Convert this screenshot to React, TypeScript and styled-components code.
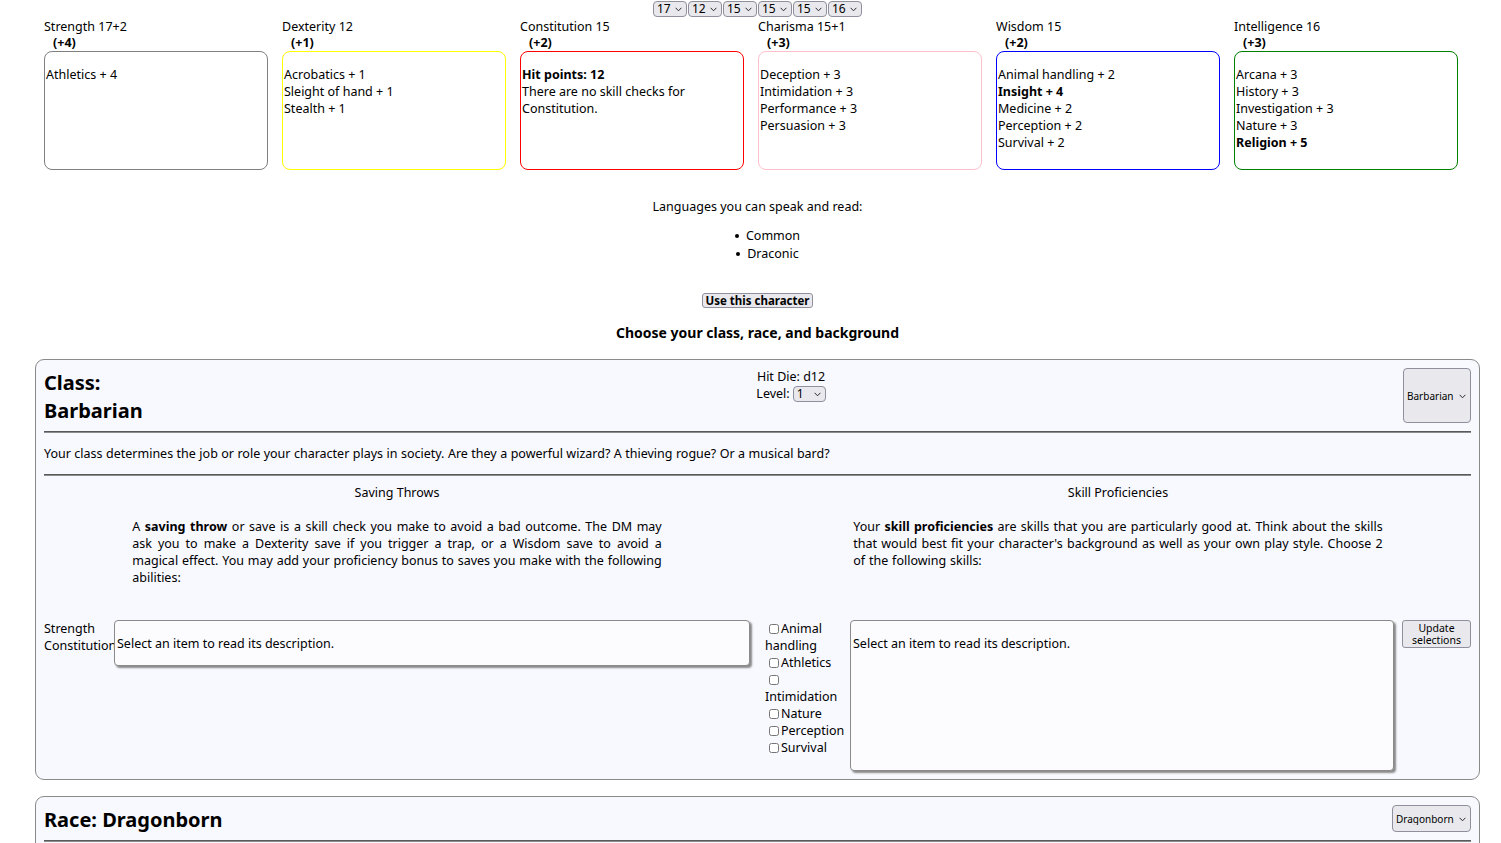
import React from "react";
import styled, { createGlobalStyle } from "styled-components";

const FONT = `"Noto Sans", "Open Sans", "DejaVu Sans", sans-serif`;

const Global = createGlobalStyle`
  html, body { margin: 0; padding: 0; background: #ffffff; }
  body {
    font-family: ${FONT};
    font-size: 12.5px;
    line-height: 17px;
    color: #000;
  }
`;

const Page = styled.div`
  padding-left: 14px;
`;

const ScoreBar = styled.div`
  display: flex;
  justify-content: center;
  gap: 1px;
  height: 17.5px;
  padding-top: 1px;
  box-sizing: border-box;
`;

const SelectWrap = styled.span`
  position: relative;
  display: inline-block;
  vertical-align: top;
`;

const NativeSelect = styled.select<{ $w: number; $h: number; $fs: number }>`
  appearance: none;
  -webkit-appearance: none;
  display: block;
  width: ${(p) => p.$w}px;
  height: ${(p) => p.$h}px;
  font-family: ${FONT};
  font-size: ${(p) => p.$fs}px;
  line-height: 12px;
  background-color: #e9e9ed;
  border: 1px solid #8f8f9d;
  border-radius: 4px;
  color: #000;
  padding: 0 0 0 3px;
  margin: 0;
  box-sizing: border-box;
`;

const Chevron = styled.svg`
  position: absolute;
  right: 5px;
  top: 50%;
  margin-top: -2px;
  width: 7px;
  height: 5px;
  pointer-events: none;
`;

type SelProps = {
  w: number;
  h: number;
  fs: number;
  value: string | number;
  options: (string | number)[];
};

function Dropdown({ w, h, fs, value, options }: SelProps) {
  return (
    <SelectWrap>
      <NativeSelect $w={w} $h={h} $fs={fs} defaultValue={String(value)}>
        {options.map((o) => (
          <option key={o} value={String(o)}>
            {o}
          </option>
        ))}
      </NativeSelect>
      <Chevron viewBox="0 0 7 5">
        <path d="M0.6 0.8 L3.5 3.8 L6.4 0.8" fill="none" stroke="#2b2b2b" strokeWidth="1" />
      </Chevron>
    </SelectWrap>
  );
}

const AbilityRow = styled.div`
  display: flex;
  gap: 14px;
  margin-left: 30px;
`;

const AbilityCol = styled.div`
  width: 224px;
`;

const Modifier = styled.div`
  font-weight: bold;
  padding-left: 9px;
  line-height: 16.5px;
`;

const SkillBox = styled.div<{ $color: string }>`
  box-sizing: border-box;
  height: 119px;
  border: 1px solid ${(p) => p.$color};
  border-radius: 8px;
  padding: 14px 1px 0;
  background: #fff;
`;

const SkillLine = styled.div<{ $bold?: boolean }>`
  font-weight: ${(p) => (p.$bold ? "bold" : "normal")};
`;

const Languages = styled.div`
  margin-top: 28px;
  text-align: center;
`;

const LangList = styled.ul`
  list-style: none;
  margin: 12px 0 0;
  padding-left: 20px;
  text-align: center;
`;

const LangItem = styled.li`
  line-height: 18px;
  &::before {
    content: "";
    display: inline-block;
    width: 4px;
    height: 4px;
    border-radius: 50%;
    background: #000;
    margin-right: 7px;
    vertical-align: 2px;
  }
`;

const UseRow = styled.div`
  display: flex;
  justify-content: center;
  margin-top: 30px;
`;

const SmallButton = styled.button<{ $w: number; $h: number; $fs: number; $bold?: boolean }>`
  width: ${(p) => p.$w}px;
  height: ${(p) => p.$h}px;
  font-family: ${FONT};
  font-size: ${(p) => p.$fs}px;
  line-height: ${(p) => (p.$bold ? "13px" : "12px")};
  font-weight: ${(p) => (p.$bold ? "bold" : "normal")};
  background: #e9e9ed;
  border: 1px solid #8f8f9d;
  border-radius: 3px;
  color: #000;
  padding: 0;
  margin: 0;
  box-sizing: border-box;
`;

const SectionHeading = styled.h3`
  margin: 15px 0 16px;
  font-size: 14px;
  line-height: 20px;
  text-align: center;
  font-weight: bold;
`;

const Panel = styled.section<{ $gap?: number }>`
  margin: ${(p) => p.$gap ?? 0}px 21px 0;
  border: 1px solid #8a8a8a;
  border-radius: 9px;
  background: #f8f8ff;
  padding: 8px;
`;

const PanelHeader = styled.div`
  display: flex;
  align-items: flex-start;
`;

const PanelTitle = styled.h2<{ $w?: number }>`
  margin: 1px 0 0;
  font-size: 20px;
  line-height: 28px;
  font-weight: bold;
  width: ${(p) => (p.$w ? `${p.$w}px` : "auto")};
  white-space: ${(p) => (p.$w ? "normal" : "nowrap")};
`;

const HeaderMid = styled.div`
  flex: 1;
  text-align: center;
  padding-left: 38px;
`;

const LevelLine = styled.div`
  display: flex;
  justify-content: center;
  align-items: center;
  gap: 3px;
  height: 17px;
`;

const HeaderSpacer = styled.div`
  flex: 1;
`;

const Divider = styled.div<{ $top: number }>`
  margin-top: ${(p) => p.$top}px;
  border-top: 1px solid #5a5a5a;
  border-bottom: 1px solid #8c8c8c;
`;

const Blurb = styled.p`
  margin: 12px 0 12px;
  word-spacing: 0.2px;
`;

const Columns = styled.div`
  display: grid;
  grid-template-columns: 1fr 1fr;
  column-gap: 15px;
`;

const ColTitle = styled.div`
  margin-top: 8px;
  text-align: center;
`;

const ColText = styled.p<{ $ws: number }>`
  width: 75%;
  margin: 17px auto 34px;
  text-align: justify;
  word-spacing: ${(p) => p.$ws}px;
`;

const PickRow = styled.div`
  display: flex;
  align-items: stretch;
`;

const SaveList = styled.div`
  width: 70px;
  flex: none;
`;

const SaveDescCol = styled.div`
  flex: 1;
  display: flex;
  align-items: flex-start;
`;

const SkillList = styled.div`
  width: 81px;
  flex: none;
  margin-right: 4px;
  padding-bottom: 15px;
`;

const CheckItem = styled.label`
  display: block;
`;

const Check = styled.input`
  width: 10px;
  height: 10px;
  margin: 0 2px 0 4px;
  vertical-align: -1px;
`;

const DescBox = styled.div`
  flex: 1;
  border: 1px solid #8a8a8a;
  border-radius: 4px;
  box-shadow: 2px 2px 2px #8a8a8a;
  padding: 14px 2px 13px;
  background: #fcfcff;
`;

const SideButton = styled.div`
  margin-left: 8px;
  flex: none;
`;

const scores = [17, 12, 15, 15, 15, 16];
const scoreOptions = [8, 9, 10, 11, 12, 13, 14, 15, 16, 17, 18];

type Ability = {
  label: string;
  mod: string;
  color: string;
  lines: { text: string; bold?: boolean }[];
};

const abilities: Ability[] = [
  { label: "Strength 17+2", mod: "(+4)", color: "#808080", lines: [{ text: "Athletics + 4" }] },
  {
    label: "Dexterity 12",
    mod: "(+1)",
    color: "#ffff00",
    lines: [{ text: "Acrobatics + 1" }, { text: "Sleight of hand + 1" }, { text: "Stealth + 1" }],
  },
  {
    label: "Constitution 15",
    mod: "(+2)",
    color: "#ff0000",
    lines: [{ text: "Hit points: 12", bold: true }, { text: "There are no skill checks for Constitution." }],
  },
  {
    label: "Charisma 15+1",
    mod: "(+3)",
    color: "#ffc0cb",
    lines: [
      { text: "Deception + 3" },
      { text: "Intimidation + 3" },
      { text: "Performance + 3" },
      { text: "Persuasion + 3" },
    ],
  },
  {
    label: "Wisdom 15",
    mod: "(+2)",
    color: "#0000ff",
    lines: [
      { text: "Animal handling + 2" },
      { text: "Insight + 4", bold: true },
      { text: "Medicine + 2" },
      { text: "Perception + 2" },
      { text: "Survival + 2" },
    ],
  },
  {
    label: "Intelligence 16",
    mod: "(+3)",
    color: "#008000",
    lines: [
      { text: "Arcana + 3" },
      { text: "History + 3" },
      { text: "Investigation + 3" },
      { text: "Nature + 3" },
      { text: "Religion + 5", bold: true },
    ],
  },
];

const skillChoices = ["Animal handling", "Athletics", "Intimidation", "Nature", "Perception", "Survival"];
const levels = Array.from({ length: 20 }, (_, i) => i + 1);

export default function App() {
  return (
    <Page>
      <Global />
      <ScoreBar>
        {scores.map((s, i) => (
          <Dropdown key={i} w={34} h={16} fs={12} value={s} options={scoreOptions} />
        ))}
      </ScoreBar>

      <AbilityRow>
        {abilities.map((a) => (
          <AbilityCol key={a.label}>
            <div>{a.label}</div>
            <Modifier>{a.mod}</Modifier>
            <SkillBox $color={a.color}>
              {a.lines.map((l) => (
                <SkillLine key={l.text} $bold={l.bold}>
                  {l.text}
                </SkillLine>
              ))}
            </SkillBox>
          </AbilityCol>
        ))}
      </AbilityRow>

      <Languages>
        <div>Languages you can speak and read:</div>
        <LangList>
          <LangItem>Common</LangItem>
          <LangItem>Draconic</LangItem>
        </LangList>
      </Languages>

      <UseRow>
        <SmallButton $w={111} $h={15} $fs={11.5} $bold>
          Use this character
        </SmallButton>
      </UseRow>

      <SectionHeading>Choose your class, race, and background</SectionHeading>

      <Panel>
        <PanelHeader>
          <PanelTitle $w={97}>Class: Barbarian</PanelTitle>
          <HeaderMid>
            <div>Hit Die: d12</div>
            <LevelLine>
              Level:
              <Dropdown w={33} h={16} fs={12} value={1} options={levels} />
            </LevelLine>
          </HeaderMid>
          <Dropdown w={68} h={55} fs={10} value="Barbarian" options={["Barbarian", "Bard", "Cleric", "Druid", "Fighter"]} />
        </PanelHeader>
        <Divider $top={6} />
        <Blurb>
          Your class determines the job or role your character plays in society. Are they a powerful wizard? A
          thieving rogue? Or a musical bard?
        </Blurb>
        <Divider $top={0} />
        <Columns>
          <ColTitle>Saving Throws</ColTitle>
          <ColTitle>Skill Proficiencies</ColTitle>
          <ColText $ws={0.3}>
            A <b>saving throw</b> or save is a skill check you make to avoid a bad outcome. The DM may ask you to
            make a Dexterity save if you trigger a trap, or a Wisdom save to avoid a magical effect. You may add your
            proficiency bonus to saves you make with the following abilities:
          </ColText>
          <ColText $ws={0.6}>
            Your <b>skill proficiencies</b> are skills that you are particularly good at. Think about the skills that
            would best fit your character's background as well as your own play style. Choose 2 of the following
            skills:
          </ColText>
          <PickRow>
            <SaveList>
              <div>Strength</div>
              <div>Constitution</div>
            </SaveList>
            <SaveDescCol>
              <DescBox>Select an item to read its description.</DescBox>
            </SaveDescCol>
          </PickRow>
          <PickRow>
            <SkillList>
              {skillChoices.map((s) => (
                <CheckItem key={s}>
                  <Check type="checkbox" />
                  {s}
                </CheckItem>
              ))}
            </SkillList>
            <DescBox>Select an item to read its description.</DescBox>
            <SideButton>
              <SmallButton $w={69} $h={28} $fs={10.5}>
                Update
                <br />
                selections
              </SmallButton>
            </SideButton>
          </PickRow>
        </Columns>
      </Panel>

      <Panel $gap={16}>
        <PanelHeader>
          <PanelTitle>Race: Dragonborn</PanelTitle>
          <HeaderSpacer />
          <Dropdown w={79} h={27} fs={10} value="Dragonborn" options={["Dragonborn", "Dwarf", "Elf", "Gnome", "Human"]} />
        </PanelHeader>
        <Divider $top={6} />
        <Blurb>
          Your race determines your ancestry and a few of your natural talents, as well as the languages you know.
        </Blurb>
      </Panel>
    </Page>
  );
}
